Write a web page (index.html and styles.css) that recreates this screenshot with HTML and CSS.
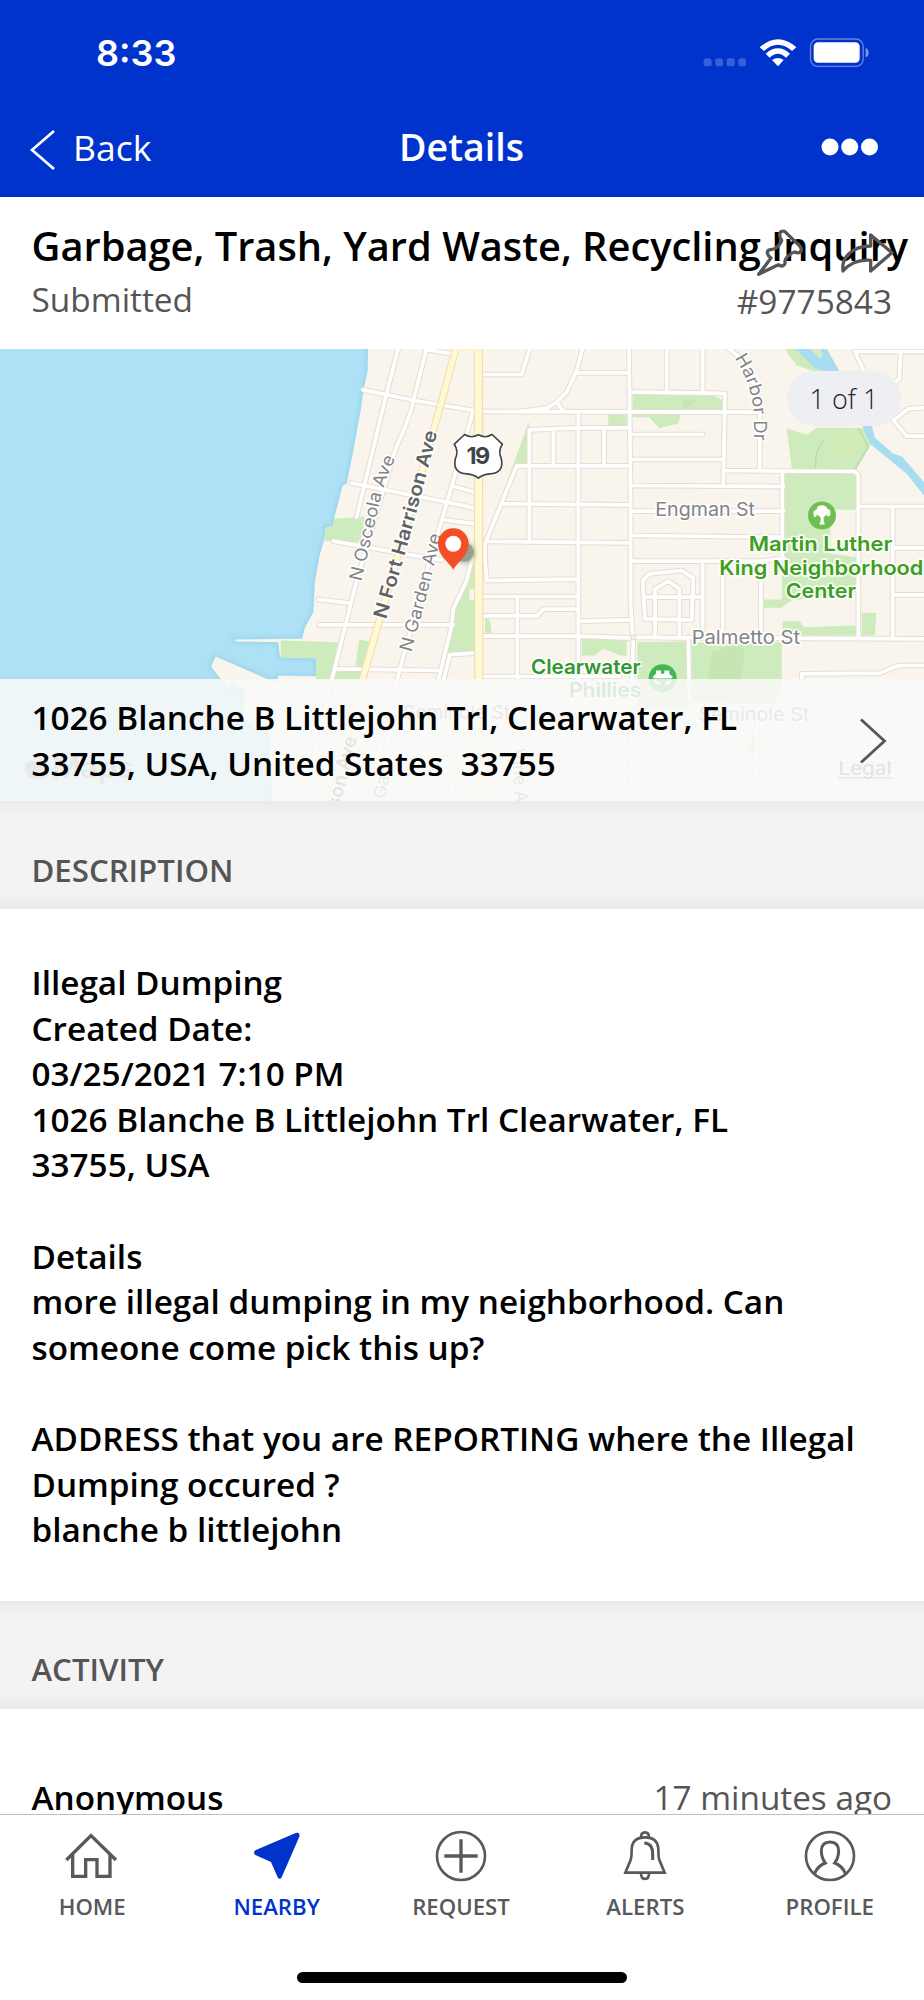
FILE: index.html
```html
<!DOCTYPE html>
<html lang="en">
<head>
<meta charset="utf-8">
<title>Details</title>
<link rel="stylesheet" href="styles.css">
</head>
<body>
<div class="app">
  <header class="topbar">
    <div class="status">
      <span class="time">8:33</span>
      <svg class="status-icons" viewBox="70 110 500 95" width="166.7" height="31.7">
        <g fill="#fff" fill-opacity=".22"><rect x="72" y="174" width="24" height="24" rx="8"/><rect x="107" y="174" width="23" height="24" rx="8"/><rect x="141" y="174" width="24" height="24" rx="8"/><rect x="176" y="174" width="23" height="24" rx="8"/></g>
        <path d="M240 141 Q295 93 350 141 L337 152 Q295 115 253 152 Z M258 160 Q295 128 331 160 L319 172 Q295 149 270 172 Z M277 179 Q295 167 312 179 L295 198 Z" fill="#fff"/>
        <rect x="392.500" y="116" width="158" height="82" rx="22" fill="none" stroke="#fff" stroke-opacity=".4" stroke-width="4"/>
        <rect x="402" y="126" width="138" height="61" rx="13" fill="#fff"/>
        <path d="M558 143 Q567 147 567 157 Q567 167 558 171 Z" fill="#fff" fill-opacity=".5"/>
      </svg>
    </div>
    <nav class="nav">
      <a class="back"><svg width="26" height="42" viewBox="0 0 26 42"><path d="M24 2 L2 21 L24 40" fill="none" stroke="#fff" stroke-width="2.800"/></svg><span>Back</span></a>
      <h1 class="nav-title">Details</h1>
      <svg class="more" width="58" height="18" viewBox="0 0 58 18" fill="#fff"><circle cx="9" cy="9" r="8.500"/><circle cx="28.700" cy="9" r="8.500"/><circle cx="48.500" cy="9" r="8.500"/></svg>
    </nav>
  </header>

  <main class="content">
    <section class="summary">
      <h2 class="title">Garbage, Trash, Yard Waste, Recycling Inquiry</h2>
      <div class="meta"><span class="state">Submitted</span><span class="number">#9775843</span></div>
      <div class="actions">
        <svg width="50" height="50" viewBox="165 80 150 150"><path d="M176 222 L213 173 C198 162 198 148 215 147 C226 148 240 134 245 120 C234 104 238 90 254 93 L301 139 C309 153 298 162 284 155 C272 158 256 172 255 182 C257 196 247 201 235 193 Z"/></svg>
        <svg width="56.700" height="45" viewBox="415 90 170 135"><path d="M513 105 L577 158 L513 213 V181 C480 178 450 190 430 213 C424 170 460 138 513 138 Z"/></svg>
      </div>
    </section>

    <section class="map">
      <svg class="map-art" width="924" height="452.500" viewBox="0 348.500 924 452.500">
        <defs>
          <filter id="soft" x="-20%" y="-20%" width="140%" height="140%"><feGaussianBlur stdDeviation="7"/></filter>
          <path id="land" d="M204 20 L203 90 L190 150 L183 205 L160 330 L140 430 L128 435 L103 530 L98 558 L78 560 L72 600 L60 640 L45 720 L40 815 L15 860 L6 895 L-197 897 L-192 903 L-65 905 L-60 950 L48 953 L48 1007 L-65 1005 L-72 1027 L-253 948 L-267 978 L-242 1010 L-215 1045 L-205 1030 L-165 1050 L-170 1130 L-140 1165 L-93 1170 L-82 1400 L1900 1400 L1900 20 Z"/>
          <g id="roads" fill="none" stroke-linecap="round" stroke-linejoin="round">
            <g transform="translate(300 340) scale(.33333)">
              <path d="M297 15 L258 165 L170 530 M382 15 L340 180 C335 220 310 270 285 330 L170 720 L100 1000 L40 1260 M190 148 L345 180 L520 210 M385 28 L460 40 M520 210 L440 490 L395 640 L300 985 L230 1260 M155 428 L440 485 L525 503 M462 438 L525 455 M432 538 L525 550 M100 602 L370 650 L425 658 M55 777 L150 788 M58 853 L460 853 M110 985 L420 990 M520 640 L500 720 L460 805 L455 855 L415 1020 L360 1200 M430 1020 L450 942 L525 938"/>
              <path d="M548 102 L665 102 L692 15 M850 15 L830 90 L800 155 L770 185 L740 203 L660 213 M770 185 L790 213 M830 97 H980 M550 213 L1390 215 M835 215 V1400 M688 605 V268 L835 262 H985 M760 265 V375 M912 262 V375 M985 376 H650 L555 610 V650 L560 720 L835 716 M610 490 L985 493 M565 603 L985 607 M550 768 H835 M550 826 H712 L730 806 H835 M652 770 V1010 M845 842 L985 838 M550 887 H840 L1000 893 M550 1008 H960 M0 1240 H1370 M280 1110 L240 1350 M480 1240 L440 1400 M400 1360 L500 1362 M550 1330 H830"/>
            </g>
            <g transform="translate(610 340) scale(.33333)">
              <path d="M57 15 L62 500 V790 Q64 850 70 890 L66 1017 L60 1400 M170 15 V155 M278 15 V155 M68 155 L320 158 L345 160 L340 430 M68 282 H278 M68 357 H338 M340 390 L735 393 L745 405 V890 M449 215 V385 M68 435 L520 438 M517 390 V655 M68 512 H520 M68 585 L510 590 M68 662 H460 L520 652 M278 662 V885 M338 670 V885 M453 700 V880 M105 835 L98 720 L118 700 L215 690 L250 712 L245 838 Z M135 885 V745 L175 722 L208 745 V885 M100 770 H275 M68 890 L200 892 L960 895 M235 890 L238 1080 M745 498 H960 M848 498 V890 M850 622 H960 M850 763 H960 M575 1315 V1000 L810 998 L865 975 H960 M765 100 L735 33 H960 M872 33 L868 115 L850 130 M960 200 L895 205 L850 240 L890 287 H960 M345 15 L395 55 L440 150 L449 215 M68 1313 H440 V1140 M570 1258 H960 M600 1127 H960 M192 1355 V1400 M320 1355 V1400 M450 1355 V1400 M576 1355 V1400 M700 1355 V1400 M832 1355 V1400"/>
            </g>
          </g>
        </defs>
        <rect y="348" width="924" height="454" fill="#aee1f5"/>
        <g transform="translate(300 340) scale(.33333)">
          <use href="#land" fill="#8fcfe8" stroke="#8fcfe8" stroke-width="14" opacity=".6" filter="url(#soft)"/>
          <use href="#land" fill="#f9f4ec"/>
          <g fill="#cdebbc">
            <path d="M103 535 L195 528 L185 605 L72 600 L78 560 H98 Z M-58 900 L115 905 L90 1017 H48 V953 L-58 950 Z M178 897 L208 903 L185 985 L165 985 Z M105 992 H185 V1020 H100 Z M687 242 L682 370 L650 376 L560 590 Z M522 645 V935 L450 940 L425 1020 H415 L455 860 L460 805 L500 720 Z M555 832 L570 840 L575 880 H555 Z M925 222 H980 V255 H925 Z M845 893 H980 V945 H960 L910 925 L885 945 H845 Z"/>
            <path d="M508 745 H522 V780 H508 Z" fill="#f9f4ec"/>
          </g>
        </g>
        <g transform="translate(610 340) scale(.33333)">
          <g fill="#cdebbc">
            <path d="M68 163 L310 166 L340 180 V208 H68 Z M68 230 H118 L148 263 L205 248 L212 220 H68 Z M530 263 L590 283 L620 262 H760 L783 310 L738 388 H546 Z M525 400 H738 V508 H660 L662 640 L738 650 V755 L545 780 L515 802 H462 V777 H515 L517 640 L525 600 Z M518 842 H570 L582 860 L738 855 V885 H518 Z M755 817 H799 L795 885 H755 Z M82 905 L228 903 L232 1100 H82 Z M245 905 H515 V1050 L495 1090 L245 1085 Z M440 1150 V1240 H412 Z M520 20 H600 L690 95 H620 L560 75 Z"/>
          </g>
          <path d="M305 935 L360 915 L405 925 L395 1000 L380 1040 H287 Z M220 180 H262 L212 215 Z" fill="#c5e6b3"/>
          <path d="M660 275 L740 262 L765 320 L690 355 Z" fill="#d3ebb4"/>
          <path d="M545 15 H645 L690 95 H650 L612 80 Z M757 255 H785 L795 292 L850 340 L876 348 L942 425 V465 L890 400 L780 310 Z" fill="#a8dcf1"/>
          <path d="M598 22 H628 L640 40 L630 55 Z" fill="#d5ecc2"/>
          <path d="M745 262 L775 320 L735 385 M640 300 L620 335 L615 385" fill="none" stroke="#b9dda6" stroke-width="4"/>
        </g>
        <use href="#roads" stroke="#e5ddd2" stroke-width="17"/>
        <use href="#roads" stroke="#fff" stroke-width="11"/>
        <g transform="translate(300 340) scale(.33333)" fill="none">
          <g stroke="#f8d9ae" stroke-width="28"><path d="M470 15 L420 200 L235 850 L150 1150 L90 1400" stroke-width="23"/><path d="M535 15 L537 1400"/></g>
          <g stroke="#fdf9d3" stroke-width="21"><path d="M470 15 L420 200 L235 850 L150 1150 L90 1400" stroke-width="17"/><path d="M535 15 L537 1400"/></g>
          <path d="M470 27 H540" stroke="#fdf3cd" stroke-width="10"/>
        </g>
        <circle cx="633" cy="637" r="2.500" fill="#f9f4ec" stroke="#ddd5c9"/>

        <g class="label" transform="translate(300 340) scale(.33333)">
          <path id="osceola" d="M184 724 L236 500 Q250 430 288 348" fill="none" stroke="none"/>
          <path id="fort" d="M258 838 Q340 560 413 271" fill="none" stroke="none"/>
          <path id="garden" d="M334 936 L392 720 L424 580" fill="none" stroke="none"/>
          <text font-size="53"><textPath href="#osceola" textLength="386" lengthAdjust="spacingAndGlyphs">N Osceola Ave</textPath></text>
          <text class="major" font-size="57"><textPath href="#fort" textLength="584" lengthAdjust="spacingAndGlyphs">N Fort Harrison Ave</textPath></text>
          <text font-size="53"><textPath href="#garden" textLength="364" lengthAdjust="spacingAndGlyphs">N Garden Ave</textPath></text>
          <text x="310" y="1135" font-size="57" textLength="320" lengthAdjust="spacingAndGlyphs">Seminole St</text>
          <text class="major" font-size="57" transform="translate(118 1405) rotate(-76)">son Ave</text>
          <text font-size="53" transform="translate(250 1430) rotate(-82)">N Ga</text>
          <text font-size="53" transform="translate(635 1225) rotate(86)">Vine Ave</text>
          <text class="team" x="693" y="1002" font-size="61" textLength="329" lengthAdjust="spacingAndGlyphs">Clearwater</text>
          <text class="team" x="807" y="1070" font-size="61" textLength="217" lengthAdjust="spacingAndGlyphs">Phillies</text>
        </g>
        <g class="label" transform="translate(610 340) scale(.33333)">
          <path id="harbor" d="M374 52 Q427 130 433 238 L433 310" fill="none" stroke="none"/>
          <text font-size="53"><textPath href="#harbor" textLength="260" lengthAdjust="spacingAndGlyphs">Harbor Dr</textPath></text>
          <text x="136" y="528" font-size="57" textLength="299" lengthAdjust="spacingAndGlyphs">Engman St</text>
          <text x="245" y="910" font-size="57" textLength="325" lengthAdjust="spacingAndGlyphs">Palmetto St</text>
          <text x="265" y="1143" font-size="57" textLength="333" lengthAdjust="spacingAndGlyphs">Seminole St</text>
          <g class="park"><text x="416" y="633" textLength="431" lengthAdjust="spacingAndGlyphs">Martin Luther</text><text x="328" y="704" textLength="612" lengthAdjust="spacingAndGlyphs">King Neighborhood</text><text x="527" y="773" textLength="211" lengthAdjust="spacingAndGlyphs">Center</text></g>
          <circle cx="636" cy="525" r="42" fill="#70bf54"/>
          <path d="M628 552 Q633 545 632 530 L621 522 L618 529 Q609 532 611 520 Q607 510 620 508 Q620 494 635 494 Q650 494 652 505 Q662 506 661 516 Q663 528 652 527 L650 522 L641 530 Q640 545 645 552 Z" fill="#fff"/>
          <circle cx="158" cy="1013" r="42" fill="#43b552"/>
          <path d="M138 990 H153 V1000 H163 V990 H178 V1000 L189 1010 L182 1014 H134 L127 1010 L138 1000 Z M130 1018 L150 1023 L152 1034 L138 1030 Z M186 1018 L166 1023 L164 1034 L178 1030 Z" fill="#fff"/>
          <text class="legal" x="685" y="1303" font-size="57" textLength="160" lengthAdjust="spacingAndGlyphs">Legal</text><path d="M684 1312 H849" stroke="#666" stroke-width="4"/>
        </g>
        <g transform="translate(0 340) scale(.33333)" fill="#777" fill-opacity=".85">
          <path d="M110 1262 Q125 1248 140 1265 Q128 1285 145 1300 Q130 1325 110 1313 Q88 1323 77 1292 Q70 1255 110 1262 Z M108 1252 Q108 1238 124 1232 Q126 1248 108 1252 Z"/>
          <text class="maps" x="155" y="1312" textLength="248" lengthAdjust="spacingAndGlyphs">Maps</text>
        </g>
        <g transform="translate(300 340) scale(.33333)">
          <path d="M494 282 Q514 295 535 283 Q556 295 576 282 L607 311 Q593 332 604 355 Q613 398 569 400 Q548 402 535 413 Q522 402 501 400 Q457 398 466 355 Q477 332 463 311 Z" fill="#fff" stroke="#404446" stroke-width="5" stroke-linejoin="round"/>
          <text class="shield" x="533" y="370" text-anchor="middle">19</text>
          <circle cx="493" cy="637" r="32" fill="#4b5a49" opacity=".4" filter="url(#soft)"/><circle cx="493" cy="635" r="29" fill="#7d9377" opacity=".6"/>
          <path d="M460 688 C448 664 414 648 414 609 A46 46 0 0 1 506 609 C506 648 472 664 460 688 Z" fill="#f44e27"/>
          <circle cx="460" cy="610" r="24" fill="#fff"/>
        </g>
      </svg>
      <span class="counter">1 of 1</span>
      <div class="address">
        <p class="address-text">1026 Blanche B Littlejohn Trl, Clearwater, FL<br>33755, USA, United States&nbsp; 33755</p>
        <svg width="28" height="46" viewBox="0 0 28 46"><path d="M2 1.500 L25.500 23 L2 44.500" fill="none" stroke="#555" stroke-width="2.800"/></svg>
      </div>
    </section>

    <h3 class="section-head description">DESCRIPTION</h3>
    <section class="body-text">
      <p>Illegal Dumping<br>Created Date:<br>03/25/2021 7:10 PM<br>1026 Blanche B Littlejohn Trl Clearwater, FL<br>33755, USA</p>
      <p>Details<br>more illegal dumping in my neighborhood. Can<br>someone come pick this up?</p>
      <p>ADDRESS that you are REPORTING where the Illegal<br>Dumping occured ?<br>blanche b littlejohn</p>
    </section>

    <h3 class="section-head activity">ACTIVITY</h3>
    <section class="entry"><span class="who">Anonymous</span><span class="when">17 minutes ago</span></section>
  </main>

  <footer class="tabbar">
    <div class="tabs">
      <a class="tab"><svg viewBox="193 144 168 168" fill="none" stroke="#58595b" stroke-width="10"><path d="M200 240 L274 167 L349 240 M219 225 V289 H258 V239 H292 V289 H331 V225"/></svg><span>HOME</span></a>
      <a class="tab active"><svg viewBox="749 144 168 168" fill="#0033cc"><path d="M889 159 Q903 155 900 170 L847 292 Q841 302 835 292 L815 246 L768 225 Q760 218 768 211 Z"/></svg><span>NEARBY</span></a>
      <a class="tab"><svg viewBox="0 0 168 168" fill="none" stroke="#58595b" stroke-width="8"><circle cx="84" cy="84" r="72"/><path d="M34 84 H134 M84 34 V134" stroke-width="10"/></svg><span>REQUEST</span></a>
      <a class="tab"><svg viewBox="464 144 168 168" fill="none" stroke="#58595b" stroke-width="8"><path d="M489 278 H607 L592 242 Q588 235 588 207 Q586 172 548 172 Q510 172 508 207 Q508 235 504 242 Z M536 172 Q536 157 548 157 Q560 157 560 172 M536 280 Q536 297 548 297 Q560 297 560 280"/><path d="M546 189 Q571 190 571 222 V240" stroke-width="9"/></svg><span>ALERTS</span></a>
      <a class="tab"><svg viewBox="1019 144 168 168" fill="none" stroke="#58595b" stroke-width="8"><circle cx="1103" cy="228" r="72"/><path d="M1057 280 Q1067 257 1089 249 Q1077 232 1077 213 Q1077 186 1103 186 Q1129 186 1129 213 Q1129 232 1117 249 Q1139 257 1149 280" stroke-width="9"/></svg><span>PROFILE</span></a>
    </div>
    <div class="home-indicator"></div>
  </footer>
</div>
</body>
</html>
```

FILE: styles.css
```css
* { box-sizing: border-box; }
body { margin: 0; background: #fff; font-family: "Open Sans", "Noto Sans", sans-serif; color: #000; }
h1, h2, h3, p { margin: 0; }
svg { display: block; flex: none; }
.app { width: 924px; height: 2000px; display: flex; flex-direction: column; overflow: hidden; }

.topbar { height: 197px; flex: none; background: #0033cc; color: #fff; }
.status { height: 105px; padding: 31px 54px 0 96px; display: flex; justify-content: space-between; align-items: flex-start; }
.time { font: 600 36px/44px Inter, sans-serif; }
.status-icons { margin-top: 6px; }
.nav { height: 92px; padding: 0 45px 0 30px; display: grid; grid-template-columns: 1fr auto 1fr; align-items: center; }
.back { display: flex; align-items: center; font-size: 35.5px; line-height: 48px; gap: 17px; margin-top: -8px; }
.back svg { margin-top: 5px; }
.nav-title { font-size: 37.5px; line-height: 52px; font-weight: 600; margin: -8px 0 0 14px; }
.more { justify-self: end; margin-top: -8px; }

.content { flex: 1; min-height: 0; overflow: hidden; }
.summary { position: relative; height: 151.500px; padding: 21px 32px 0 31.5px; }
.title { font-size: 39.8px; line-height: 56px; font-weight: 600; white-space: nowrap; }
.meta { display: flex; justify-content: space-between; color: #555; font-size: 33.4px; line-height: 46px; padding-top: 2px; }
.number { padding-top: 2px; }
.actions { position: absolute; left: 755px; top: 30px; display: flex; align-items: flex-start; gap: 33px; }
.actions svg:last-child { margin-top: 3px; }
.actions path { fill: none; stroke: #555; stroke-width: 10; stroke-linejoin: round; }

.map { position: relative; height: 452.500px; overflow: hidden; }
.label { font-family: Inter, sans-serif; font-weight: 400; fill: #828385; }
.label text { stroke: #fff; stroke-width: 10px; stroke-opacity: .9; stroke-linejoin: round; paint-order: stroke; }
.label .major { font-weight: 600; fill: #606266; }
.label .team { font-weight: 600; fill: #2f972f; }
.label .park { font-weight: 600; font-size: 61px; fill: #3d9f22; }
.label .legal { font-weight: 500; fill: #666; stroke: none; }
.maps { font: 600 84px Inter, sans-serif; }
.shield { font: 700 70px Inter, sans-serif; letter-spacing: -4px; fill: #404446; }
.counter { position: absolute; right: 23px; top: 22.500px; width: 114px; height: 55px; border-radius: 28px; background: #eeeff3; color: #222; font-size: 27px; font-weight: 300; line-height: 55px; text-align: center; }
.address { position: absolute; left: 0; right: 0; bottom: 0; height: 122px; padding: 16px 37px 0 31.5px; background: rgba(249, 249, 248, .86); display: flex; justify-content: space-between; }
.address svg { margin-top: 23px; }
.address-text, .body-text, .who { font-size: 33.300px; line-height: 45.600px; font-weight: 600; white-space: nowrap; }

.section-head { height: 108px; padding: 47px 32px 0 31.5px; font-size: 31.2px; line-height: 44px; font-weight: 600; color: #555; background: linear-gradient(#ebebeb, #f3f3f3 16px, #f3f3f3 90px, #ebebeb); }
.section-head.activity { padding-top: 46px; }
.body-text { height: 691.500px; padding: 51px 32px 0 31.5px; }
.body-text p + p { margin-top: 45.600px; }
.entry { display: flex; justify-content: space-between; padding: 66.500px 32px 0 31.5px; line-height: 45.600px; }
.when { font-size: 33.300px; color: #555; }

.tabbar { height: 186px; flex: none; border-top: 1px solid #bfbfbf; background: #fff; }
.tabs { display: grid; grid-template-columns: repeat(5, 184.400px); height: 157px; padding-top: 13px; }
.tab { display: flex; flex-direction: column; align-items: center; gap: 8px; font-size: 22.200px; line-height: 30px; font-weight: 600; color: #58595b; }
.tab svg { width: 56px; height: 56px; }
.tab.active { color: #0033cc; }
.home-indicator { width: 330px; height: 11px; margin: 0 auto; border-radius: 6px; background: #000; }
```
